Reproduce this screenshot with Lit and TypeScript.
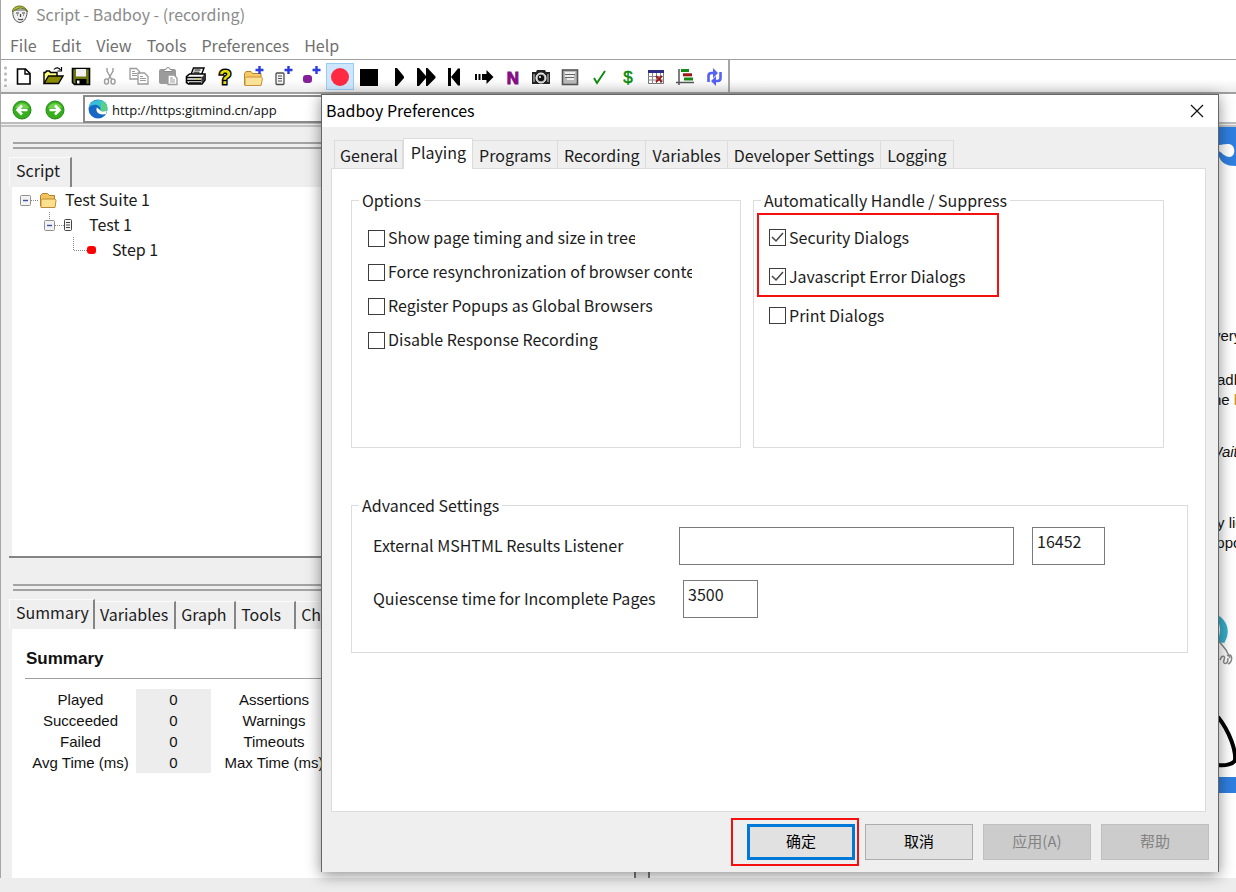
import { LitElement, html, svg, css } from "lit";
import { customElement } from "lit/decorators.js";
import { classMap } from "lit/directives/class-map.js";

const plus = svg`<path d="M17.5 1v8M13.5 5h8" stroke="#2b3bdc" stroke-width="2.4" fill="none"/>`;

const tools = [
  { name: "New", art: svg`<path d="M5.5 4h8l4.500 4.500V19h-12.500z" fill="#fff" stroke="#000" stroke-width="1.600"/><path d="M13 4v5h5" fill="none" stroke="#000" stroke-width="1.400"/>` },
  { name: "Open", art: svg`<path d="M3 18V7.500h1.500l1-1.500h3l1 1.500H16V11" fill="#ffff8a" stroke="#000" stroke-width="1.400"/><path d="M3 18.500 7.500 11H22l-4.500 7.500z" fill="#8a8a00" stroke="#000" stroke-width="1.400"/><path d="M13 4.500c2-2.500 5-2 6.500.5M20.500 2v4h-4" fill="none" stroke="#000" stroke-width="1.200"/>` },
  { name: "Save", art: svg`<path d="M3.500 3.500h17v16h-15l-2-2z" fill="#6f7414" stroke="#000" stroke-width="1.600"/><path d="M7 4h10v7.500H7z" fill="#f2f2f2"/><path d="M6.500 14h11v5.500h-11z" fill="#000"/><path d="M8 15.500h2.500v3H8z" fill="#fff"/>` },
  { name: "Cut", art: svg`<path d="M9 3v3l5 9M15 3v3l-5 9" fill="none" stroke="#9b9b9b" stroke-width="1.400"/><ellipse cx="8.500" cy="16.500" rx="2" ry="2.600" fill="none" stroke="#9b9b9b" stroke-width="1.400"/><ellipse cx="15" cy="16.500" rx="2" ry="2.600" fill="none" stroke="#9b9b9b" stroke-width="1.400"/>` },
  { name: "Copy", art: svg`<g fill="#fff" stroke="#9b9b9b" stroke-width="1.300"><path d="M3 3.500h6.500l3 3V14H3z"/><path d="M11 8h6.500l3.500 3.500V19H11z"/></g><path d="M5 6.500h3M5 8.500h5M5 10.500h5M13 11.500h3M13 13.500h6M13 15.500h6" stroke="#9b9b9b" fill="none"/>` },
  { name: "Paste", art: svg`<rect x="3" y="4" width="17" height="15" rx="2" fill="#9b9b9b"/><path d="M8 6.500V4.500h2a2 2 0 0 1 4 0h2v2z" fill="#fff" stroke="#8a8a8a"/><path d="M12 10h6l3 3v6.500h-9z" fill="#fff" stroke="#9b9b9b" stroke-width="1.300"/><path d="M14 13h3M14 15h5M14 17h5" stroke="#9b9b9b" fill="none"/>` },
  { name: "Print", art: svg`<path d="M7 9.500 9.500 3H20l-2.500 6.500z" fill="#fff" stroke="#000" stroke-width="1.400"/><path d="M10.500 5h6M9.500 7.200h6" stroke="#000" fill="none"/><path d="M2.500 11.500 5.500 9H21v6l-3 4H4.500l-2-1.500z" fill="#fff" stroke="#000" stroke-width="1.600"/><path d="M3 12.500h14.500M3 15.500h14.500M5 18h12" stroke="#000" stroke-width="1.500" fill="none"/><path d="m17.500 12.500 3-3v5l-3 4z" fill="#333"/><path d="M12 14h3" stroke="#e0d000" fill="none"/>` },
  { name: "Help", art: svg`<text class="query" x="12" y="19" text-anchor="middle">?</text>` },
  { name: "Add suite", art: svg`<path d="M2.500 20V8.500l1.500-2h5l1.500 2h8.500V20z" fill="#f7c968" stroke="#b9822a"/><path d="M3 20.500v-7l1.500-1.500h15l1 1.500-1.500 7z" fill="#fbe198" stroke="#c89239"/>${plus}` },
  { name: "Add test", art: svg`<rect x="5" y="8" width="8" height="11.500" rx="1" fill="#f4f4f4" stroke="#4e4e4e" stroke-width="1.300"/><path d="M7 11h4M7 13.500h4M7 16h4" stroke="#4e4e4e" fill="none"/>${plus}` },
  { name: "Add step", art: svg`<rect x="4" y="10" width="9" height="8" rx="3" fill="#86209a"/>${plus}` },
  { name: "Record", on: true, art: svg`<circle cx="12" cy="12" r="9" fill="#ff2a42"/>` },
  { name: "Stop", art: svg`<path d="M3 4h18v17H3z" fill="#000"/>` },
  { name: "Play", art: svg`<path d="M9 3h2l7 8.500v1.500L11 21H9z" fill="#000"/>` },
  { name: "Play all", art: svg`<path d="M3 3h2l7 8V3h1.500l8 8.500v1.500l-8 8H12v-8l-7 8H3z" fill="#000"/>` },
  { name: "Rewind", art: svg`<path d="M5 3h3v18H5zM8 12l7-8.500h2v17h-2z" fill="#000"/>` },
  { name: "Step over", art: svg`<path d="M3 9h2v6H3zM6.500 9h2v6h-2zM10 9h4.500V5l7 7-7 7v-4H10z" fill="#000"/>` },
  { name: "Navigate", art: svg`<text class="letter" x="12" y="19" text-anchor="middle">N</text>` },
  { name: "Snapshot", art: svg`<path d="M3 7h4l1-2h8l1 2h4v12H3z" fill="#222"/><path d="M5 9v8M19 9v8" stroke="#d8d8d8" fill="none"/><circle cx="12" cy="13" r="5" fill="#bbb" stroke="#fff"/><circle cx="12" cy="13" r="3.200" fill="#111"/><circle cx="11" cy="12" r="1" fill="#fff"/>` },
  { name: "Notes", art: svg`<rect x="4.500" y="5" width="15" height="14.500" fill="#b9b9b9" stroke="#555" stroke-width="1.600"/><path d="M7 8h10M7 11h9M9 14h7" stroke="#fff" stroke-width="1.500" fill="none"/><path d="M7 9.500h10M7 12.500h9" stroke="#666" fill="none"/>` },
  { name: "Assertion", art: svg`<path d="m7 13 3 5 8-12" fill="none" stroke="#0a8a0a" stroke-width="1.900"/>` },
  { name: "Variable", art: svg`<text class="dollar" x="12" y="18" text-anchor="middle">$</text>` },
  { name: "Summary", art: svg`<path d="M4.500 6.500h15v12h-15z" fill="#fff" stroke="#777"/><path d="M4 5h16v3H4z" fill="#2d2d86"/><path d="M4 11.500h16M4 15h16M8.500 8v11M12.500 8v11M16.500 8v11" stroke="#888" fill="none"/><path d="m12 11 6 6m0-6-6 6" stroke="#a01818" stroke-width="1.800" fill="none"/>` },
  { name: "Graph", art: svg`<path d="M6 4v16M3 17.500h18" stroke="#555" stroke-width="1.500" fill="none"/><path d="M8 4h8v3H8zM11 12.500h9v3h-9z" fill="#148a14"/><path d="M10 8.300h9v3h-9z" fill="#a01414"/>` },
  { name: "Refresh", art: svg`<path d="M6.500 17V11q0-3 3-3h2M18.500 7v6q0 3-3 3h-2" fill="none" stroke="#5560f5" stroke-width="2.600"/><path d="M11 3v10L16 8zM14 11v10L9 16z" fill="#5560f5"/>` },
];

@customElement("app-toolbar")
class AppToolbar extends LitElement {
  static styles = css`
    :host { display: flex; height: 32px; border-top: 1px solid #a0a0a0; border-bottom: 2px solid #a0a0a0; background: linear-gradient(#fff 60%, #ececec); }
    .bar { display: flex; align-items: center; justify-content: space-between; width: 724px; padding: 2px 0 2px 3px; border-right: 2px solid #a6a6a6; }
    .grip { width: 3px; height: 22px; margin-right: 2px; background: radial-gradient(circle, #b8b8b8 1px, transparent 2px) 0 0 / 3px 6px; }
    .tool { box-sizing: border-box; width: 28px; height: 27px; padding: 1px; border: 1px solid transparent; background: none; line-height: 0; }
    .on { background: #cce6fb; border-color: #9accf3; }
    .art { width: 24px; height: 24px; }
    .query { font: bold 20px "Liberation Sans"; fill: #e8e100; stroke: #000; stroke-width: 3px; paint-order: stroke; }
    .letter { font: bold 17px "Liberation Sans"; fill: #850d85; stroke: #850d85; }
    .dollar { font: 17px "Liberation Sans"; fill: #0a8a0a; stroke: #0a8a0a; stroke-width: 0.5px; }
  `;
  render() {
    return html`<div class="bar"><span class="grip"></span>
      ${tools.map((t) => html`<button class=${classMap({ tool: true, on: !!t.on })} aria-label=${t.name}>
        <svg class="art" viewBox="0 0 24 24">${t.art}</svg></button>`)}
    </div>`;
  }
}

@customElement("script-tree")
class ScriptTree extends LitElement {
  static styles = css`
    :host { display: block; padding: 0 8px; font: 16px/25px "Noto Sans CJK SC", sans-serif; color: #1a1a1a; }
    .row { display: flex; align-items: center; height: 25px; }
    .art { flex: none; height: 25px; }
  `;
  render() {
    const box = (x: number) => svg`<rect x=${x + 0.5} y="8.500" width="10" height="10" rx="1" fill="#f3f3f3" stroke="#919191"/><path d=${`M${x + 3} 13.500h5`} stroke="#3b55a5" stroke-width="1.400"/>`;
    const dots = (d: string) => svg`<path d=${d} fill="none" stroke="#888" stroke-dasharray="1 1"/>`;
    return html`
      <div class="row"><svg class="art" width="45" viewBox="0 0 45 25">${dots("M11 13.500h8")}${box(0)}
        <path d="M20.500 19V8.500l2-2h5l2 2h5V19z" fill="#f3c35f" stroke="#b57f2c"/><path d="M21 20.500v-7l1.500-1.500h12.500l1 1.500-1 7z" fill="#fbe08e" stroke="#bd8a35"/></svg>Test Suite 1</div>
      <div class="row"><svg class="art" width="69" viewBox="0 0 69 25">${dots("M29.500 0v8M35 13.500h9")}${box(24)}
        <rect x="44.500" y="7.500" width="7" height="11" rx="1" fill="#f4f4f4" stroke="#444"/><path d="M46 10.500h4M46 13h4M46 15.500h4" stroke="#444"/></svg>Test 1</div>
      <div class="row"><svg class="art" width="92" viewBox="0 0 92 25">${dots("M53.500 0v13.500h14")}
        <rect x="67" y="9" width="9" height="8" rx="3" fill="#f00"/></svg>Step 1</div>`;
  }
}

@customElement("preferences-dialog")
class PreferencesDialog extends LitElement {
  static styles = css`
    :host { display: flex; flex-direction: column; box-sizing: border-box; background: #efefef; border: 1px solid #666; border-bottom: 0; box-shadow: 0 3px 14px rgba(0, 0, 0, 0.45); font: 16px/24px "Noto Sans CJK SC", sans-serif; color: #1c1c1c; }
    .title { display: flex; align-items: center; justify-content: space-between; height: 32px; padding: 0 14px 0 4px; background: #fff; color: #000; }
    .caption { padding-bottom: 2px; }
    .close { width: 14px; height: 14px; padding: 0; border: 0; background: none; line-height: 0; }
    .tabs { display: flex; align-items: flex-end; height: 30px; margin: 11px 12px 0; }
    .tab { box-sizing: border-box; height: 28px; padding: 0 6px 0 6px; border: 1px solid #dcdcdc; border-bottom: 0; border-left-width: 0; background: #efefef; font: inherit; color: inherit; white-space: nowrap; }
    .tab:first-child { padding: 0 4px 0 5px; border-left-width: 1px; }
    .current { height: 31px; margin-bottom: -1px; padding: 0 6px 4px 7px; background: #fff; border-left: 1px solid #dcdcdc; position: relative; }
    .panel { flex: 1; margin: 0 12px 0 9px; padding: 19px 17px 0 19px; border: 1px solid #dcdcdc; background: #fff; }
    .pair { display: grid; grid-template-columns: 390fr 411fr; gap: 12px; margin-right: 24px; }
    .group { box-sizing: border-box; min-width: 0; margin: 0; padding: 0 12px 0 16px; border: 1px solid #dcdcdc; height: 260px; }
    .legend { margin-left: -9px; padding: 0 3px; }
    .advanced { height: 160px; margin-top: 45px; padding: 10px 21px; }
    .advanced .legend { margin-left: -14px; }
    .checks { display: grid; grid-auto-rows: 34px; padding-top: 9px; }
    .wide { grid-auto-rows: 39px; padding-top: 6px; }
    .check { display: flex; align-items: center; gap: 3px; white-space: nowrap; }
    .clip { overflow: hidden; padding-bottom: 2px; }
    .short { width: 247px; }
    .long { width: 304px; }
    .box { appearance: none; flex: none; width: 17px; height: 17px; margin: 0; border: 1px solid #3c3c3c; background: #fff; }
    .box:checked { background: #fff url("data:image/svg+xml,%3Csvg xmlns='http://www.w3.org/2000/svg' viewBox='0 0 15 15'%3E%3Cpath d='M2 7l4 4 7-8' fill='none' stroke='%23444' stroke-width='1.500'/%3E%3C/svg%3E"); }
    .marked { position: relative; padding-left: 15px; }
    .marked .legend { margin-left: -8px; }
    .marked::before { content: ""; position: absolute; inset: 1px auto auto 3px; width: 238px; height: 80px; border: 2px solid #f5100f; pointer-events: none; }
    .field { display: grid; grid-template-columns: 288px minmax(0, 335px) 73px; column-gap: 18px; align-items: center; height: 38px; margin-bottom: 15px; }
    .name { padding-bottom: 2px; }
    .edit { box-sizing: border-box; width: 100%; height: 38px; padding: 0 4px 10px; border: 1px solid #7a7a7a; background: #fff; font: inherit; color: inherit; border-radius: 0; }
    .number { width: 75px; margin-left: 4px; }
    .buttons { display: flex; justify-content: flex-end; gap: 10px; padding: 12px 9px 12px 0; }
    .button { box-sizing: border-box; width: 108px; height: 36px; padding: 0 0 2px; border: 1px solid #adadad; background: #e1e1e1; font: inherit; font-size: 15px; color: #000; }
    .button:disabled { background: #ccc; border-color: #bfbfbf; color: #838383; }
    .ok { position: relative; }
    .primary { border: 3px solid #0078d7; }
    .ok::before { content: ""; position: absolute; inset: -6px -4px -6px -16px; border: 2px solid #f5100f; pointer-events: none; }
  `;
  render() {
    const tabs = ["General", "Playing", "Programs", "Recording", "Variables", "Developer Settings", "Logging"];
    const check = (text: string, on = false, clip = "") => html`<label class="check"><input class="box" type="checkbox" ?checked=${on} /><span class="clip ${clip}">${text}</span></label>`;
    return html`
      <div class="title"><span class="caption">Badboy Preferences</span>
        <button class="close" aria-label="Close"><svg width="14" height="14" viewBox="0 0 14 14"><path d="M1 1l12 12M13 1 1 13" stroke="#111" stroke-width="1.200"/></svg></button></div>
      <div class="tabs" role="tablist">${tabs.map((t) => html`<button role="tab" class=${classMap({ tab: true, current: t === "Playing" })}>${t}</button>`)}</div>
      <div class="panel">
        <div class="pair">
          <fieldset class="group"><legend class="legend">Options</legend>
            <div class="checks">
              ${check("Show page timing and size in tree", false, "short")}
              ${check("Force resynchronization of browser conte", false, "long")}
              ${check("Register Popups as Global Browsers")}
              ${check("Disable Response Recording")}
            </div></fieldset>
          <fieldset class="group marked"><legend class="legend">Automatically Handle / Suppress</legend>
            <div class="checks wide">
              ${check("Security Dialogs", true)}
              ${check("Javascript Error Dialogs", true)}
              ${check("Print Dialogs")}
            </div></fieldset>
        </div>
        <fieldset class="group advanced"><legend class="legend">Advanced Settings</legend>
          <div class="field"><label class="name" for="listener">External MSHTML Results Listener</label>
            <input class="edit" id="listener" /><input class="edit" aria-label="Port" value="16452" /></div>
          <div class="field"><label class="name" for="quiet">Quiescense time for Incomplete Pages</label>
            <input class="edit number" id="quiet" value="3500" /></div>
        </fieldset>
      </div>
      <div class="buttons">
        <span class="ok"><button class="button primary">确定</button></span>
        <button class="button">取消</button>
        <button class="button" disabled>应用(A)</button>
        <button class="button" disabled>帮助</button>
      </div>`;
  }
}

@customElement("app-root")
class AppRoot extends LitElement {
  static styles = css`
    :host { display: flex; flex-direction: column; position: relative; box-sizing: border-box; min-height: 100vh; overflow: hidden; background: #ededed; padding-bottom: 14px; font: 16px/24px "Noto Sans CJK SC", sans-serif; color: #1c1c1c; }
    .window { flex: 1; display: flex; flex-direction: column; border-left: 1px solid #a6a6a6; background: #efefef; }
    .title { display: flex; align-items: center; gap: 7px; box-sizing: border-box; height: 30px; padding: 0 0 2px 10px; background: #fff; color: #8b8b8b; }
    .menu { display: flex; align-items: center; gap: 15px; height: 29px; padding-left: 9px; background: #fff; color: #707070; }
    .item { color: inherit; text-decoration: none; }
    .address { display: flex; align-items: center; height: 28px; padding-left: 11px; background: #fff; border-bottom: 2px solid #bdbdbd; }
    .nav { width: 20px; height: 20px; padding: 0; margin: 3px 13px 0 0; border: 0; background: none; line-height: 0; }
    .urlbox { display: flex; align-items: center; flex: 1; gap: 4px; box-sizing: border-box; height: 28px; margin: 1px 400px 0 5px; padding-left: 3px; border: 2px solid #8a8a8a; background: #fff; }
    .url { flex: 1; padding: 2px 0 0; border: 0; background: none; outline: 0; font: 13px/20px "Open Sans", sans-serif; color: #111; }
    .main { flex: 1; display: grid; grid-template-columns: 633px 16px 1fr; border-top: 2px solid #c4c4c4; margin-top: 1px; }
    .docks { display: grid; grid-template-rows: 431fr 320fr; padding-left: 8px; }
    .dock { display: flex; flex-direction: column; box-sizing: border-box; min-width: 0; }
    .top { border-bottom: 2px solid #858585; padding-top: 15px; }
    .bottom { padding-top: 26px; }
    .gripper { height: 3px; margin-left: 4px; border: solid #a3a3a3; border-width: 2px 0; }
    .tabs { display: flex; align-items: flex-end; height: 30px; margin-top: 8px; }
    .tab { box-sizing: border-box; min-width: 60px; height: 28px; padding: 0 6px 4px 5px; border: 0; border-top: 1px solid #fbfbfb; border-right: 2px solid #858585; background: #efefef; font: inherit; color: inherit; text-align: left; }
    .current { min-width: 63px; height: 30px; padding: 0 4px 6px 6px; border-left: 1px solid #fbfbfb; }
    .pane { flex: 1; margin-left: 3px; background: #fff; }
    .report { padding: 18px 0 0 13px; font: 15px/21px "Liberation Sans", sans-serif; color: #111; }
    .heading { margin: 0; padding: 0 0 7px 1px; font-size: 17px; line-height: 24px; border-bottom: 1px solid #a0a0a0; }
    .stats { border-collapse: collapse; margin-top: 10px; }
    .stats th, .stats td { padding: 0; width: 111px; text-align: center; font-weight: normal; height: 21px; }
    .stats th:nth-child(3) { width: 126px; }
    .stats td { width: 75px; background: #ededed; }
    .split { border: solid #777; border-width: 0 2px; }
    .web { display: flex; flex-direction: column; align-items: flex-end; background: #fff; overflow: hidden; font: 15px/20px "Liberation Sans", sans-serif; color: #111; }
    .art { flex: none; display: block; width: 24px; }
    .lines { display: flex; flex-direction: column; width: 28px; height: 408px; padding-top: 158px; box-sizing: border-box; white-space: nowrap; }
    .line { margin: 0; }
    .near { padding-left: 5px; }
    .deep { padding-left: 9px; }
    .gap { margin-top: 24px; }
    .far { margin-top: 32px; }
    .farther { margin-top: 51px; }
    .bold { color: #d98a26; }
    .strip { align-self: stretch; height: 16px; background: #2f7fe0; }
    .dialog { position: absolute; inset: 94px 17px 20px 321px; }
  `;
  render() {
    const stats = [["Played", "Assertions"], ["Succeeded", "Warnings"], ["Failed", "Timeouts"], ["Avg Time (ms)", "Max Time (ms)"]];
    return html`
      <div class="window">
        <div class="title"><svg width="18" height="20" viewBox="0 0 18 20"><path d="M2 6c-1 7 2 12 7 12.500 5-.5 7.500-6 7-12.500z" fill="#eee" stroke="#555"/><path d="M1.500 8C1 1 14-1 16.500 8L14 5 9 4 4 6z" fill="#aebb3f" stroke="#6b7420"/><path d="M5 9h3M11 9h3M6 11h1M12 11h1M9.500 10v3M7 15q3 1.500 5 0" stroke="#444" fill="none" stroke-width="1.200"/></svg>
          <span>Script - Badboy - (recording)</span></div>
        <nav class="menu">${["File", "Edit", "View", "Tools", "Preferences", "Help"].map((m) => html`<a class="item" href="#">${m}</a>`)}</nav>
        <app-toolbar></app-toolbar>
        <div class="address">
          ${["M15.500 10H6M10 5.500 5.500 10l4.500 4.500", "M4.500 10H14M10 5.500l4.500 4.500-4.500 4.500"].map((d, i) => html`<button class="nav" aria-label=${i ? "Forward" : "Back"}><svg width="20" height="20" viewBox="0 0 20 20"><circle cx="10" cy="10" r="9" fill="#35b01c" stroke="#23851a"/><path d="M3 8a7.500 7.500 0 0 1 14 0z" fill="#6fd24c"/><path d=${d} fill="none" stroke="#fff" stroke-width="2.600"/></svg></button>`)}
          <div class="urlbox"><svg width="20" height="20" viewBox="0 0 20 20"><circle cx="10" cy="10" r="9.500" fill="#1668c4"/><path d="M.5 9C2 1 14-2 18.500 5c2 4 .5 7-3 7.500-3 .5-4-.5-3-2C13 6 5 3 .5 9z" fill="#35c2d6"/><path d="M13 2c4 1 7 5 6 8.500-1 2.500-4 2.500-6 1.500z" fill="#5bd082"/><path d="M9 8.500c-2 3 1 8.500 9 6.500l1-3.500c-3 2-6 1-7-.5z" fill="#fff"/></svg>
            <input class="url" aria-label="Address" value="http://https:gitmind.cn/app" /></div>
        </div>
        <div class="main">
          <div class="docks">
            <section class="dock top"><div class="gripper"></div>
              <div class="tabs"><button class="tab current">Script</button></div>
              <div class="pane"><script-tree></script-tree></div></section>
            <section class="dock bottom"><div class="gripper"></div>
              <div class="tabs">${["Summary", "Variables", "Graph", "Tools", "Checks"].map((t, i) => html`<button class=${classMap({ tab: true, current: i === 0 })}>${t}</button>`)}</div>
              <div class="pane report"><h2 class="heading">Summary</h2>
                <table class="stats">${stats.map(([a, b]) => html`<tr><th scope="row">${a}</th><td>0</td><th scope="row">${b}</th></tr>`)}</table></div></section>
          </div>
          <div class="split"></div>
          <div class="web">
            <svg class="art" height="41" viewBox="0 0 24 41"><path d="M0 0h24v17H0z" fill="#2f7fe0"/><path d="M6 26c2 10 8 13 18 13v-9H18z" fill="#2f7fe0"/><path d="M0 16h24v14H16q-6-1-10-4z" fill="#2f7fe0"/><path d="M6 18c4 0 5-1 11-1 7 1 7 12 1 13-6 0-8-5-12-6z" fill="#fff"/></svg>
            <div class="lines"><p class="line near">very</p><p class="line gap deep">adb</p><p class="line near">he <span class="bold">b</span></p><p class="line far"><em>Wait</em></p><p class="line farther deep">y lic</p><p class="line">oppo</p></div>
            <svg class="art" height="201" viewBox="0 0 24 201"><path d="M6 42q8 8 2 24M6 42q12 10 4 24" stroke="#35b0cc" stroke-width="5" fill="none"/><path d="M6 64l8 10 4 8M8 84c2-6 6-4 4 0s4 6 4-2M15 80c6-4 6 6 1 8" fill="none" stroke="#888" stroke-width="1.500"/><path d="M6 141c12 15 18 34 17 43-1 4-10 6-17 5" fill="none" stroke="#000" stroke-width="4"/></svg>
            <div class="strip"></div>
          </div>
        </div>
      </div>
      <preferences-dialog class="dialog"></preferences-dialog>`;
  }
}
